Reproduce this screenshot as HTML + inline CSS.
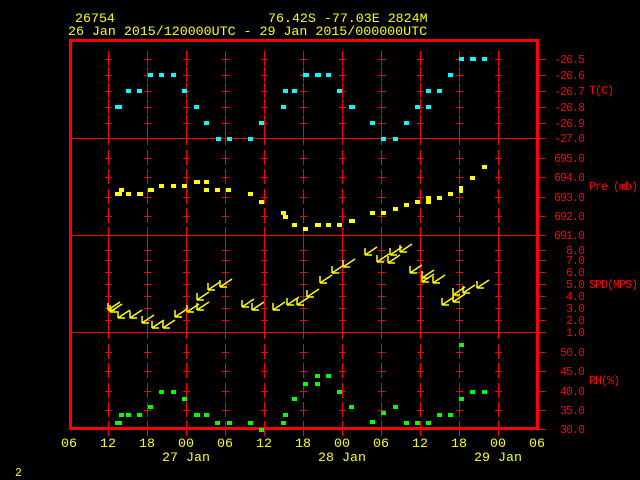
<!DOCTYPE html>
<html><head><meta charset="utf-8"><style>
html,body{margin:0;padding:0;background:#000;width:640px;height:480px;overflow:hidden}
svg{display:block}
text{font-family:"Liberation Mono",monospace}
.y{fill:#ff0}.r{fill:#f00}
.h{font-size:13.3px}.s{font-size:11.5px;letter-spacing:-0.9px}
</style></head><body>
<svg id="s" width="640" height="480" xmlns="http://www.w3.org/2000/svg">
<rect x="0" y="0" width="640" height="480" fill="#000"/>
<text class="y h" x="75" y="22">26754</text>
<text class="y h" x="268" y="22">76.42S  -77.03E  2824M</text>
<text class="y h" x="68" y="35">26 Jan 2015/120000UTC - 29 Jan 2015/000000UTC</text>
<g id="grid" stroke="#f00" stroke-width="1"></g>
<rect x="70.5" y="40.5" width="467" height="388" fill="none" stroke="#f00" stroke-width="3"/>
<g class="r s" text-anchor="end">
<text x="584" y="63">-26.5</text><text x="584" y="79">-26.6</text><text x="584" y="95">-26.7</text><text x="584" y="111">-26.8</text><text x="584" y="127">-26.9</text><text x="584" y="142">-27.0</text>
<text x="584" y="162">695.0</text><text x="584" y="181">694.0</text><text x="584" y="201">693.0</text><text x="584" y="220">692.0</text><text x="584" y="239">691.0</text>
<text x="584" y="254">8.0</text><text x="584" y="264">7.0</text><text x="584" y="276">6.0</text><text x="584" y="288">5.0</text><text x="584" y="300">4.0</text><text x="584" y="312">3.0</text><text x="584" y="324">2.0</text><text x="584" y="336">1.0</text>
<text x="584" y="356">50.0</text><text x="584" y="375">45.0</text><text x="584" y="395">40.0</text><text x="584" y="414">35.0</text><text x="584" y="433">30.0</text>
</g>
<g class="r s">
<text x="589" y="94">T(C)</text><text x="589" y="190">Pre (mb)</text><text x="589" y="288">SPD(MPS)</text><text x="589" y="384">RH(%)</text>
</g>
<g class="y h" text-anchor="middle">
<text x="69" y="447">06</text><text x="108" y="447">12</text><text x="147" y="447">18</text><text x="186" y="447">00</text><text x="225" y="447">06</text><text x="264" y="447">12</text><text x="303" y="447">18</text><text x="342" y="447">00</text><text x="381" y="447">06</text><text x="420" y="447">12</text><text x="459" y="447">18</text><text x="498" y="447">00</text><text x="537" y="447">06</text>
<text x="186" y="461">27 Jan</text><text x="342" y="461">28 Jan</text><text x="498" y="461">29 Jan</text>
</g>
<text class="y s" x="15" y="476">2</text>
<g id="pts"></g>
<g id="wind" stroke="#ff0" stroke-width="1.5" fill="none"></g>
</svg>
<script>
var NS="http://www.w3.org/2000/svg";
function el(p,t,a){var e=document.createElementNS(NS,t);for(var k in a)e.setAttribute(k,a[k]);p.appendChild(e);return e;}
var g=document.getElementById('grid');
[138.5,235.5,332.5].forEach(function(y){el(g,'line',{x1:70,x2:537,y1:y,y2:y});});
var levels=[59,75,91,107,123,138,158,177,197,216,235,250,260,272,284,296,308,320,332,352,371,391,410,429];
var cols=[108,147,186,225,264,303,342,381,420,459,498];
cols.forEach(function(x){levels.forEach(function(y){
 el(g,'line',{x1:x+.5,x2:x+.5,y1:y-8,y2:y+7});
 el(g,'line',{x1:x-3,x2:x+4,y1:y+.5,y2:y+.5});
});});
levels.forEach(function(y){el(g,'line',{x1:536,x2:545,y1:y+.5,y2:y+.5});});
var p=document.getElementById('pts');
function dots(c,arr){arr.forEach(function(a){el(p,'rect',{x:a[0]-2,y:a[1]-2,width:a[2]||5,height:a[3]||4,fill:c});});}
dots('#0ff',[[117,107,7],[128,91],[139,91],[150,75],[161,75],[173,75],[184,91],[196,107],[206,123],[218,139],[229,139],[250,139],[261,123],[283,107],[285,91],[294,91],[305,75,6],[317,75,6],[328,75],[339,91],[351,107,6],[372,123],[383,139],[395,139],[406,123],[417,107],[428,107],[428,91],[439,91],[450,75],[461,59],[472,59,6],[484,59]]);
dots('#ff0',[[117,194,7],[121,190],[128,194],[139,194,6],[150,190,6],[161,186],[173,186],[184,186],[196,182,6],[206,182],[206,190],[217,190],[228,190],[250,194],[261,202],[283,213],[285,217],[294,225],[305,229],[317,225,6],[328,225],[339,225],[351,221,6],[372,213],[383,213],[395,209],[406,205],[417,202],[428,198],[428,202],[439,198],[450,194],[461,188,4,7],[472,178],[484,167]]);
dots('#0f0',[[117,423,7],[121,415],[128,415],[139,415],[150,407],[161,392],[173,392],[184,399],[196,415,6],[206,415],[217,423],[229,423],[250,423],[261,430],[283,423],[285,415],[294,399],[305,384],[317,384],[317,376],[328,376],[339,392],[351,407],[372,422],[383,413],[395,407],[406,423],[417,423],[428,423],[439,415],[450,415],[461,399],[461,345],[472,392],[484,392]]);
var w=document.getElementById('wind');
[[108,310],[110,312],[118,318],[130,318],[142,323],[152,328],[163,328],[175,317],[187,312],[197,310],[197,300],[208,290],[220,287],[242,307],[252,310],[273,310],[287,305],[297,305],[307,297],[320,283],[332,273],[343,267],[365,255],[377,262],[388,263],[390,255],[400,252],[410,273],[422,278],[422,282],[433,283],[442,305],[453,295],[453,302],[463,293],[477,288]].forEach(function(a){
 var x=a[0],y=a[1];
 el(w,'path',{d:'M'+x+' '+y+'L'+(x+12)+' '+(y-8)+'M'+x+' '+y+'L'+(x+7)+' '+y+'M'+x+' '+y+'L'+x+' '+(y-7)});
});
</script>
</body></html>
